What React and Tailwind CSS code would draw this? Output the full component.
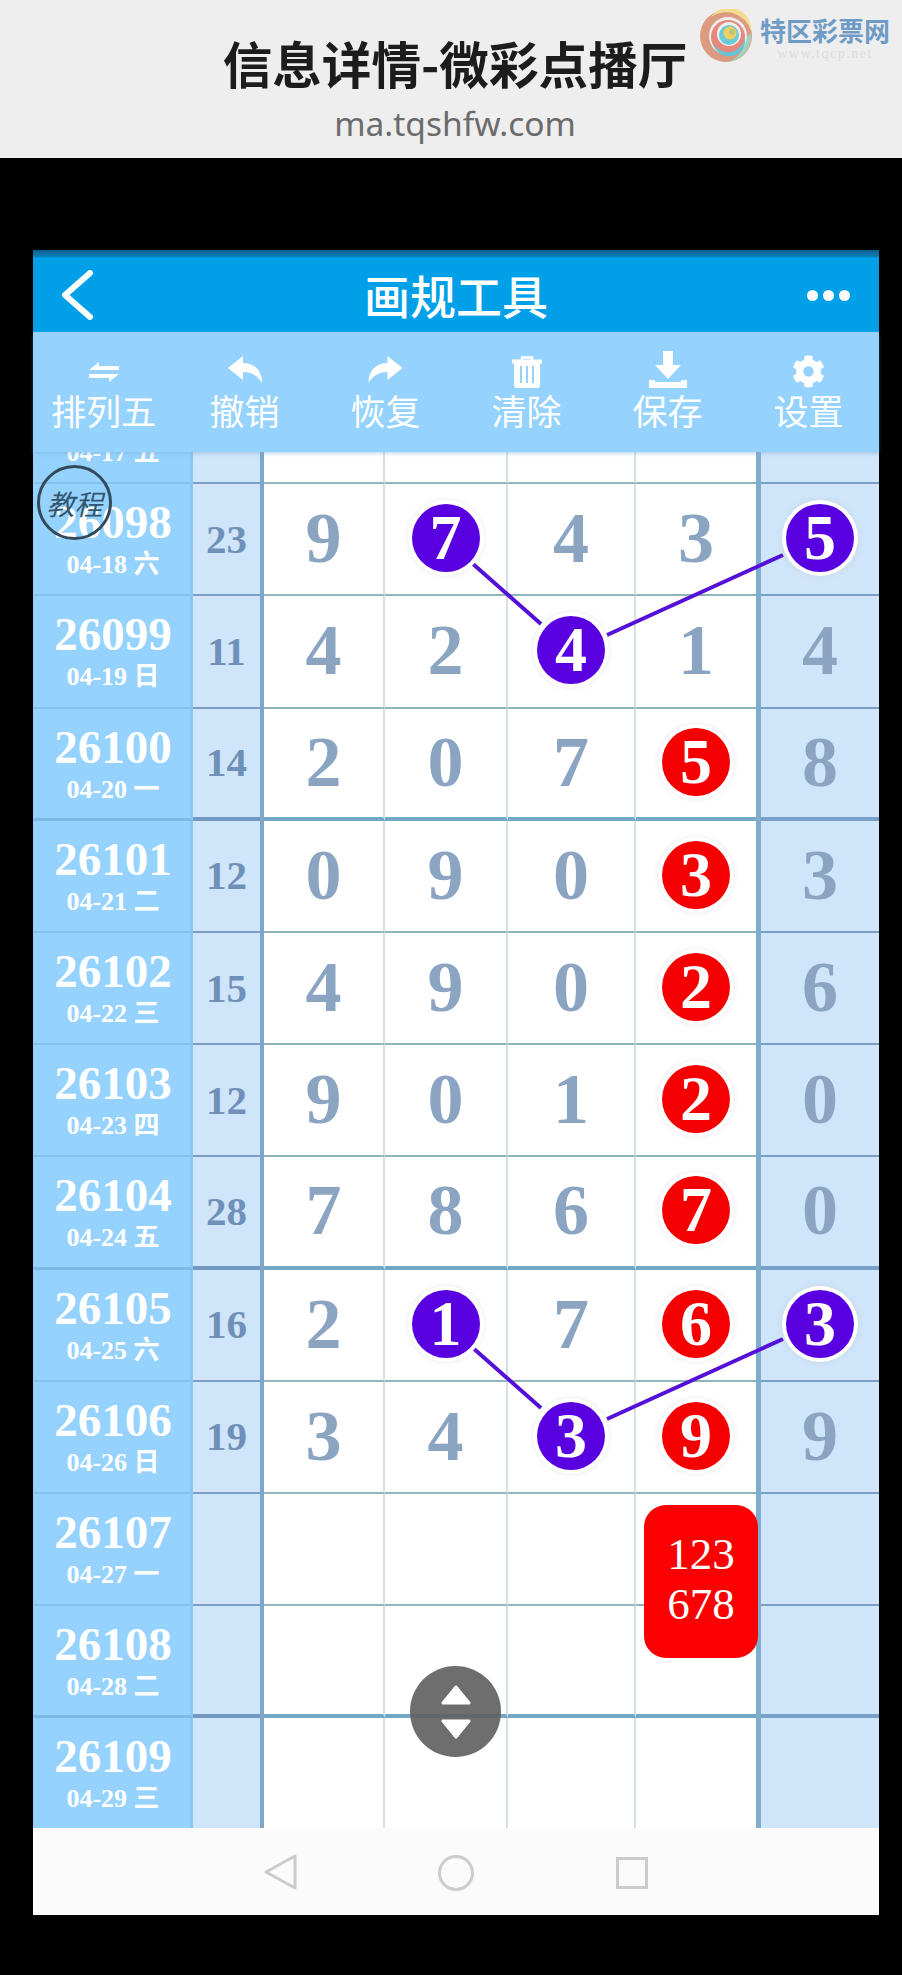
import React from "react";
import { FaCog } from "react-icons/fa";

const serif = "font-['Liberation_Serif','Noto_Sans_CJK_SC',serif]";

const rows = [
    { no: "26097", date: "04-17 五", sum: "", cells: [] },
    { no: "26098", date: "04-18 六", sum: "23", cells: [[9], [7, "p"], [4], [3], [5, "p"]] },
    { no: "26099", date: "04-19 日", sum: "11", cells: [[4], [2], [4, "p"], [1], [4]] },
    { no: "26100", date: "04-20 一", sum: "14", cells: [[2], [0], [7], [5, "r"], [8]], thick: true },
    { no: "26101", date: "04-21 二", sum: "12", cells: [[0], [9], [0], [3, "r"], [3]] },
    { no: "26102", date: "04-22 三", sum: "15", cells: [[4], [9], [0], [2, "r"], [6]] },
    { no: "26103", date: "04-23 四", sum: "12", cells: [[9], [0], [1], [2, "r"], [0]] },
    { no: "26104", date: "04-24 五", sum: "28", cells: [[7], [8], [6], [7, "r"], [0]], thick: true },
    { no: "26105", date: "04-25 六", sum: "16", cells: [[2], [1, "p"], [7], [6, "r"], [3, "p"]] },
    { no: "26106", date: "04-26 日", sum: "19", cells: [[3], [4], [3, "p"], [9, "r"], [9]] },
    { no: "26107", date: "04-27 一", sum: "", cells: [] },
    { no: "26108", date: "04-28 二", sum: "", cells: [], thick: true },
    { no: "26109", date: "04-29 三", sum: "", cells: [] },
];

function SwapIcon() {
    return (
        <svg className="mb-[5px]" width="32" height="22" viewBox="0 0 32 22" fill="#fff">
            <path d="M1 9 L11 1 L11 5 L31 5 L31 9 Z" />
            <path d="M1 13 L31 13 L21 21 L21 17 L1 17 Z" />
        </svg>
    );
}

function ReplyIcon() {
    return (
        <svg className="mb-[5px]" width="34" height="27" viewBox="0 0 34 27" fill="#fff">
            <path d="M15 0 L0 12 L15 24 V16 C24 16 30 20 34 27 C34 15 27 7 15 7 Z" />
        </svg>
    );
}

function ShareIcon() {
    return (
        <svg className="mb-[5px]" width="35" height="27" viewBox="0 0 34 27" fill="#fff">
            <path d="M19 0 L34 12 L19 24 V16 C10 16 4 20 0 27 C0 15 7 7 19 7 Z" />
        </svg>
    );
}

function TrashIcon() {
    return (
        <svg width="30" height="33" viewBox="0 0 30 33" fill="none">
            <path d="M10 5 V2.5 H20 V5" stroke="#fff" strokeWidth="2.5" />
            <path d="M0 4.5 H30 V8.5 H28 V30 Q28 33 25 33 H5 Q2 33 2 30 V8.5 H0 Z" fill="#fff" />
            <path d="M9 11 V28 M15 11 V28 M21 11 V28" stroke="#95d2fe" strokeWidth="2" />
        </svg>
    );
}

function DownloadIcon() {
    return (
        <svg width="38" height="37" viewBox="0 0 38 37" fill="#fff">
            <path d="M14 0 H24 V14 H32 L19 28 L6 14 H14 Z" />
            <path d="M0 29 L6 29 L6 31 L32 31 L32 29 L38 29 L38 37 L0 37 Z" />
        </svg>
    );
}

function Logo() {
    return (
        <svg width="54" height="54" viewBox="0 0 54 54" fill="none">
            <circle cx="27" cy="27" r="26" fill="#dc9a80" />
            <path d="M12 8 A26 26 0 0 1 52 22 A22 22 0 0 0 12 8 Z" fill="#f2dc8f" />
            <path d="M52 24 A26 26 0 0 1 28 53 A24 24 0 0 0 46 30 Z" fill="#9fd3bf" />
            <circle cx="29" cy="27" r="19" fill="#eeeeee" />
            <circle cx="29" cy="28" r="17" fill="#e7887c" />
            <path d="M14 34 A17 17 0 0 0 46 28 A14 14 0 0 1 14 34 Z" fill="#63c6d4" />
            <circle cx="30" cy="25" r="12" fill="#eeeeee" />
            <circle cx="30" cy="26" r="10" fill="#6ccbd6" />
            <circle cx="31" cy="24" r="6.5" fill="#f0cf5e" />
            <circle cx="33" cy="23" r="3" fill="#b5c978" />
        </svg>
    );
}

function Ball({ value, kind }) {
    const bg = kind === "r" ? "bg-[#f40000]" : "bg-[#5800e0]";
    return (
        <div
            className={`w-[68px] h-[68px] rounded-full ${bg} ring-[4px] ring-white shadow-[0_0_6px_3px_rgba(190,190,190,0.4)] flex items-center justify-center text-white text-[64px] font-bold leading-none z-10 relative`}
        >
            {value}
        </div>
    );
}

function NumCell({ cell, side, thick, wall }) {
    const line = thick ? "border-b-[4px] border-[#74a9c6]" : "border-b-2 border-[#8fb4bb]";
    const sideLine = thick ? "border-b-[4px] border-[#7a9fc6]" : "border-b-2 border-[#7c9fc8]";
    return (
        <div
            className={`flex items-center justify-center pb-[2px] text-[72px] font-bold text-[#8aa4c2] leading-none ${
                side ? `bg-[#cfe5f9] ${sideLine}` : `bg-white ${line}`
            } ${wall ? "border-r-2 border-r-[#d3e0e6]" : ""}`}
        >
            {cell && (cell[1] ? <Ball value={cell[0]} kind={cell[1]} /> : cell[0])}
        </div>
    );
}

function Row({ row }) {
    const { no, date, sum, cells, thick } = row;
    return (
        <div
            className={`grid grid-cols-[160px_67px_4px_121px_123px_128px_120px_5px_118px] h-[112.2px] shrink-0 ${serif}`}
        >
            <div
                className={`flex flex-col items-center bg-[#95d2fe] text-white font-bold border-r-[3px] border-r-[#8ac6f3] ${
                    thick ? "border-b-[3px] border-b-[#7fb9e6]" : "border-b-2 border-b-[#86c2ef]"
                }`}
            >
                <div className="mt-[15px] text-[47px] leading-[46px] pl-[3px]">{no}</div>
                <div className="mt-[5px] text-[26px] leading-[30px] pl-[3px]">{date}</div>
            </div>
            <div
                className={`flex items-center justify-center bg-[#cfe5f9] text-[41px] font-bold text-[#6f90b8] leading-none ${
                    thick ? "border-b-[4px] border-[#7298c2]" : "border-b-2 border-[#7c9fc8]"
                }`}
            >
                {sum}
            </div>
            <div className="bg-[#7fa5c9]" />
            <NumCell cell={cells[0]} thick={thick} wall />
            <NumCell cell={cells[1]} thick={thick} wall />
            <NumCell cell={cells[2]} thick={thick} wall />
            <NumCell cell={cells[3]} thick={thick} />
            <div className="bg-[#7fadd0]" />
            <NumCell cell={cells[4]} thick={thick} side />
        </div>
    );
}

const tools = [
    { label: "排列五", icon: <SwapIcon /> },
    { label: "撤销", icon: <ReplyIcon /> },
    { label: "恢复", icon: <ShareIcon /> },
    { label: "清除", icon: <TrashIcon /> },
    { label: "保存", icon: <DownloadIcon /> },
    { label: "设置", icon: <FaCog size={33} color="#fff" /> },
];

export default function App() {
    return (
        <div className="w-[902px] h-[1975px] bg-black font-['Noto_Sans_CJK_SC',sans-serif] overflow-hidden">
            {/* caption */}
            <div className="relative h-[158px] bg-[#eeeeee] flex flex-col items-center pl-[8px]">
                <div className="mt-[31px] text-[49.6px] leading-[62px] font-bold text-[#1c1c1c]">信息详情-微彩点播厅</div>
                <div className="mt-[10px] text-[33.5px] leading-[40px] text-[#6b6b6b] font-['Noto_Sans',sans-serif]">
                    ma.tqshfw.com
                </div>
                <div className="absolute left-[699px] top-[9px]">
                    <Logo />
                </div>
                <div className="absolute left-[758px] top-[14px] w-[134px] text-center">
                    <div className="text-[26px] leading-[32px] font-bold text-[#6f9cc6] whitespace-nowrap">特区彩票网</div>
                    <div className="text-[14px] leading-[16px] tracking-[1.5px] text-[#dcdcdc] font-['Liberation_Serif',serif] whitespace-nowrap">
                        www.tqcp.net
                    </div>
                </div>
            </div>

            {/* phone */}
            <div className="ml-[33px] mt-[92px] w-[846px]">
                <div className="h-[7px] bg-gradient-to-b from-[#0d5f8c] to-[#0a80bb]" />
                <div className="relative h-[75px] bg-[#00a0e9] flex items-center justify-center text-white">
                    <svg className="absolute left-[27px] top-[13px]" width="34" height="50" viewBox="0 0 34 50" fill="none">
                        <path d="M30 3 L5 25 L30 47" stroke="#fff" strokeWidth="6" strokeLinecap="round" strokeLinejoin="round" />
                    </svg>
                    <div className="text-[46px] leading-none font-medium pb-[2px]">画规工具</div>
                    <div className="absolute right-[29px] top-[33px] flex gap-[5px]">
                        <div className="w-[11px] h-[11px] rounded-full bg-white" />
                        <div className="w-[11px] h-[11px] rounded-full bg-white" />
                        <div className="w-[11px] h-[11px] rounded-full bg-white" />
                    </div>
                </div>
                <div className="relative z-20 h-[120px] bg-[#95d2fe] grid grid-cols-6 shadow-[0_2px_3px_rgba(120,170,210,0.4)]">
                    {tools.map((t) => (
                        <div key={t.label} className="flex flex-col items-center text-white">
                            <div className="h-[38px] mt-[18px] flex items-end justify-center">{t.icon}</div>
                            <div className="text-[35px] leading-[44px] whitespace-nowrap">{t.label}</div>
                        </div>
                    ))}
                </div>

                {/* board */}
                <div className="relative h-[1376px] overflow-hidden">
                    <div className="flex flex-col -mt-[80px]">
                        {rows.map((r) => (
                            <Row key={r.no} row={r} />
                        ))}
                    </div>

                    {/* links between picked balls, coords are board relative */}
                    <svg className="absolute left-0 top-0 z-0" width="846" height="1376" fill="none" stroke="#5510d8" strokeWidth="4">
                        <path d="M440 112 L508 172" />
                        <path d="M574 183 L750 103" />
                        <path d="M440 896 L508 956" />
                        <path d="M574 967 L750 887" />
                    </svg>

                    <div className="absolute left-[4px] top-[13px] w-[75px] h-[75px] rounded-full border-[3px] border-[#34495a] flex items-center justify-center text-[28px] italic text-[#33556e] z-30">
                        教程
                    </div>

                    <div
                        className={`absolute left-[611px] top-[1053px] w-[114px] h-[153px] rounded-[22px] bg-[#fb0000] flex flex-col items-center pt-[24px] text-white text-[45px] leading-[50px] z-20 ${serif}`}
                    >
                        <div>123</div>
                        <div>678</div>
                    </div>

                    <div className="absolute left-[377px] top-[1214px] w-[91px] h-[91px] rounded-full bg-[#5e5e5e]/90 flex items-center justify-center z-30">
                        <svg width="30" height="54" viewBox="0 0 30 54" fill="#fff" stroke="#fff" strokeWidth="3" strokeLinejoin="round">
                            <path d="M15 2 L28 18 H2 Z" />
                            <path d="M2 36 H28 L15 52 Z" />
                        </svg>
                    </div>
                </div>

                {/* android nav */}
                <div className="h-[87px] bg-[#fbfbfb] border-l-[5px] border-white flex items-center relative">
                    <svg className="absolute left-[226px] top-[26px]" width="34" height="36" viewBox="0 0 34 36" fill="none" stroke="#cccccc" strokeWidth="3" strokeLinejoin="round">
                        <path d="M2 18 L31 2 V34 Z" />
                    </svg>
                    <div className="absolute left-[400px] top-[27px] w-[36px] h-[36px] rounded-full border-[3px] border-[#cccccc]" />
                    <div className="absolute left-[578px] top-[29px] w-[32px] h-[32px] border-[3px] border-[#cccccc]" />
                </div>
            </div>
        </div>
    );
}
